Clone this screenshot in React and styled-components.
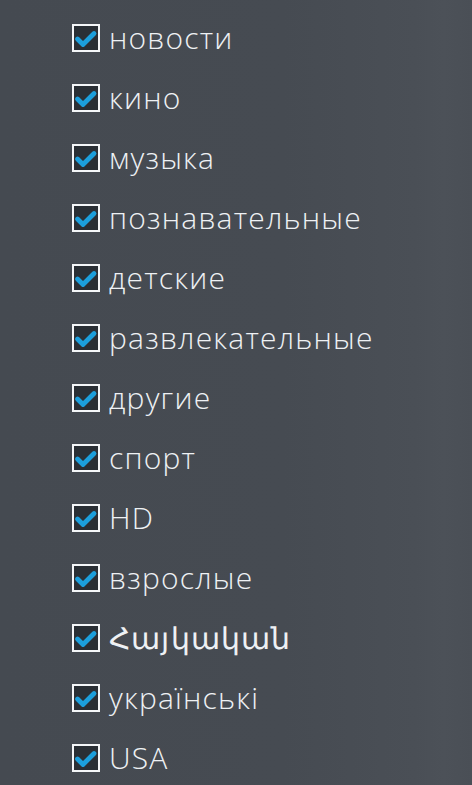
import React from 'react'
import styled, { createGlobalStyle } from 'styled-components'

const GlobalStyle = createGlobalStyle`
    html, body {
        margin: 0;
        padding: 0;
        background: #464b52;
    }
`

const Page = styled.div`
    width: 472px;
    height: 785px;
    overflow: hidden;
    background: linear-gradient(90deg, #454a51 0%, #464b52 60%, #4a4f56 88%, #4c5158 94%, #4a4f56 100%);
    font-family: 'Open Sans', 'Noto Sans', sans-serif;
`

const List = styled.ul`
    list-style: none;
    margin: 0;
    padding: 24px 0 0 72px;
    display: flex;
    flex-direction: column;
    gap: 32px;
`

const Row = styled.li`
    display: flex;
    align-items: center;
    height: 28px;
    gap: 9px;
`

const Box = styled.span`
    box-sizing: border-box;
    width: 28px;
    height: 28px;
    border: 2px solid #f4f6f8;
    background: #2a2f35;
    display: flex;
    flex-shrink: 0;
`

const Label = styled.span`
    font-size: 30px;
    font-weight: 300;
    letter-spacing: 1.2px;
    color: #eef1f4;
    line-height: 1;
    white-space: nowrap;
`

const items = [
    'новости',
    'кино',
    'музыка',
    'познавательные',
    'детские',
    'развлекательные',
    'другие',
    'спорт',
    'HD',
    'взрослые',
    'Հայկական',
    'українські',
    'USA',
]

const Check = () => (
    <svg width="24" height="24" viewBox="0 0 24 24">
        <path d="M3.5 13 L9 18.5 L20 7.5" fill="none" stroke="#1c9fdc" strokeWidth="4.8" strokeLinecap="round" strokeLinejoin="round"/>
    </svg>
)

export default function App() {
    return (
        <Page>
            <GlobalStyle/>
            <List>
                {items.map(name => (
                    <Row key={name}>
                        <Box><Check/></Box>
                        <Label>{name}</Label>
                    </Row>
                ))}
            </List>
        </Page>
    )
}
